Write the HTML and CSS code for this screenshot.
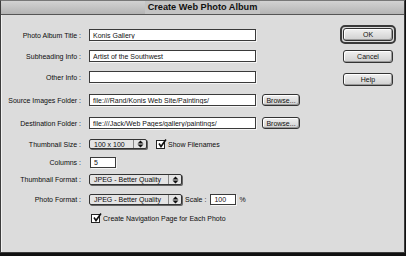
FILE: index.html
```html
<!DOCTYPE html>
<html lang="en">
<head>
    <meta charset="UTF-8">
    <title>Create Web Photo Album</title>
    <link rel="stylesheet" href="styles.css">
</head>
<body>
    <div class="window">
        <div class="titlebar"><span class="title">Create Web Photo Album</span></div>

        <div class="content">
            <div class="form">
                <div class="row first">
                    <label class="label">Photo Album Title :</label>
                    <input class="field" type="text" value="Konis Gallery">
                </div>
                <div class="row">
                    <label class="label">Subheading Info :</label>
                    <input class="field" type="text" value="Artist of the Southwest">
                </div>
                <div class="row">
                    <label class="label">Other Info :</label>
                    <input class="field" type="text" value="">
                </div>
                <div class="row wide">
                    <label class="label">Source Images Folder :</label>
                    <input class="field" type="text" value="file:///Rand/Konis Web Site/Paintings/">
                    <button class="btn browse">Browse...</button>
                </div>
                <div class="row wide">
                    <label class="label">Destination Folder :</label>
                    <input class="field" type="text" value="file:///Jack/Web Pages/gallery/paintings/">
                    <button class="btn browse">Browse...</button>
                </div>
                <div class="row thumb">
                    <label class="label">Thumbnail Size :</label>
                    <div class="popup size">
                        <span class="popup-text">100 x 100</span>
                        <span class="arrows"><svg width="7" height="8" viewBox="0 0 7 8"><path d="M3.5 0.5 L6.5 3.5 H0.5 Z M3.5 7.5 L6.5 4.5 H0.5 Z" fill="#111"/></svg></span>
                    </div>
                    <span class="check"><svg width="10" height="10" viewBox="0 0 10 10"><path d="M2 4.5 L4 7.5 L9 0.5" fill="none" stroke="#111" stroke-width="1.6"/></svg></span>
                    <span class="text">Show Filenames</span>
                </div>
                <div class="row small cols">
                    <label class="label">Columns :</label>
                    <input class="field short" type="text" value="5">
                </div>
                <div class="row small tight">
                    <label class="label">Thumbnail Format :</label>
                    <div class="popup format">
                        <span class="popup-text">JPEG - Better Quality</span>
                        <span class="arrows"><svg width="7" height="8" viewBox="0 0 7 8"><path d="M3.5 0.5 L6.5 3.5 H0.5 Z M3.5 7.5 L6.5 4.5 H0.5 Z" fill="#111"/></svg></span>
                    </div>
                </div>
                <div class="row small">
                    <label class="label">Photo Format :</label>
                    <div class="popup format">
                        <span class="popup-text">JPEG - Better Quality</span>
                        <span class="arrows"><svg width="7" height="8" viewBox="0 0 7 8"><path d="M3.5 0.5 L6.5 3.5 H0.5 Z M3.5 7.5 L6.5 4.5 H0.5 Z" fill="#111"/></svg></span>
                    </div>
                    <span class="text scale">Scale :</span>
                    <input class="field scale-field" type="text" value="100">
                    <span class="text percent">%</span>
                </div>
                <div class="row small nav">
                    <span class="check"><svg width="10" height="10" viewBox="0 0 10 10"><path d="M2 4.5 L4 7.5 L9 0.5" fill="none" stroke="#111" stroke-width="1.6"/></svg></span>
                    <span class="text">Create Navigation Page for Each Photo</span>
                </div>
            </div>

            <div class="buttons">
                <div class="default-ring"><button class="btn side">OK</button></div>
                <button class="btn side">Cancel</button>
                <button class="btn side">Help</button>
            </div>
        </div>
    </div>
</body>
</html>
```

FILE: styles.css
```css
body {
    margin: 0;
    background-color: #111;
    font-family: "Liberation Sans", Arial, sans-serif;
    font-size: 7px;
    color: #0c0c0c;
}

.window {
    width: 403px;
    height: 251px;
    background-color: #dcdcdc;
    border: 1px solid #3c3c3c;
    border-top-color: #777;
    box-shadow: inset 1px 1px 0 #f2f2f2;
}

.titlebar {
    height: 13px;
    background: linear-gradient(#d2d2d2, #b4b4b4);
    border-bottom: 1px solid #555;
    display: flex;
    justify-content: center;
    align-items: center;
}

.title {
    font-size: 9.2px;
    font-weight: bold;
    color: #111;
    padding: 0 3px;
    background-color: #c4c4c4;
    line-height: 13px;
}

.content {
    display: flex;
}

.form {
    width: 300px;
    padding-top: 14px;
}

.row {
    display: flex;
    align-items: center;
    height: 12px;
    margin-top: 9px;
}

.row.first {
    margin-top: 0;
}

.row.wide {
    margin-top: 11px;
}

.row.thumb {
    height: 10px;
    margin-top: 10px;
}

.row.small {
    height: 11px;
}

.row.cols {
    margin-top: 8px;
}

.row.tight {
    margin-top: 6px;
}

.row.nav {
    height: 9px;
    padding-left: 90px;
}

.label {
    width: 80px;
    margin-right: 8px;
    text-align: right;
    white-space: nowrap;
}

.field {
    box-sizing: border-box;
    width: 167px;
    height: 100%;
    margin: 0;
    padding: 0 3px;
    font: inherit;
    color: #111;
    background-color: #fff;
    border: 1px solid #3a3a3a;
    box-shadow: 1px 1px 0 #f4f4f4;
    outline: none;
}

.field.short {
    width: 26px;
    margin-left: 1px;
}

.field.scale-field {
    width: 26px;
}

.btn {
    box-sizing: border-box;
    font: inherit;
    color: #111;
    padding: 0;
    background: linear-gradient(#f0f0f0, #d0d0d0);
    border: 1px solid #333;
    border-radius: 3px;
    box-shadow: inset -1px -1px 0 #999, inset 1px 1px 0 #fff;
}

.browse {
    width: 38px;
    height: 12px;
    margin-left: 6px;
}

.popup {
    box-sizing: border-box;
    height: 100%;
    display: flex;
    align-items: center;
    background-color: #e4e4e4;
    border: 1px solid #333;
    border-radius: 2px;
    box-shadow: 1px 1px 0 #666;
}

.popup.size {
    width: 58px;
}

.popup.format {
    width: 93px;
}

.popup-text {
    flex: 1;
    padding-left: 4px;
    white-space: nowrap;
}

.arrows {
    width: 12px;
    height: 100%;
    display: flex;
    align-items: center;
    justify-content: center;
    border-left: 1px solid #888;
}

.check {
    box-sizing: border-box;
    width: 9px;
    height: 9px;
    background-color: #fff;
    border: 1px solid #222;
    position: relative;
    margin-left: 9px;
    margin-right: 3px;
}

.check svg {
    position: absolute;
    left: 0;
    top: -2px;
}

.row.nav .check {
    margin-left: 0;
}

.text {
    white-space: nowrap;
}

.scale {
    margin-left: 3px;
    margin-right: 4px;
}

.percent {
    margin-left: 3px;
}

.buttons {
    margin-left: 42px;
    padding-top: 13px;
    display: flex;
    flex-direction: column;
}

.side {
    width: 50px;
    height: 13px;
}

.default-ring {
    border: 2px solid #3a3a3a;
    border-radius: 5px;
    padding: 1px;
    margin: -3px 0 0 -3px;
    width: 50px;
    height: 13px;
    margin-bottom: 6px;
}

.buttons .btn + .btn {
    margin-top: 10px;
}
```
